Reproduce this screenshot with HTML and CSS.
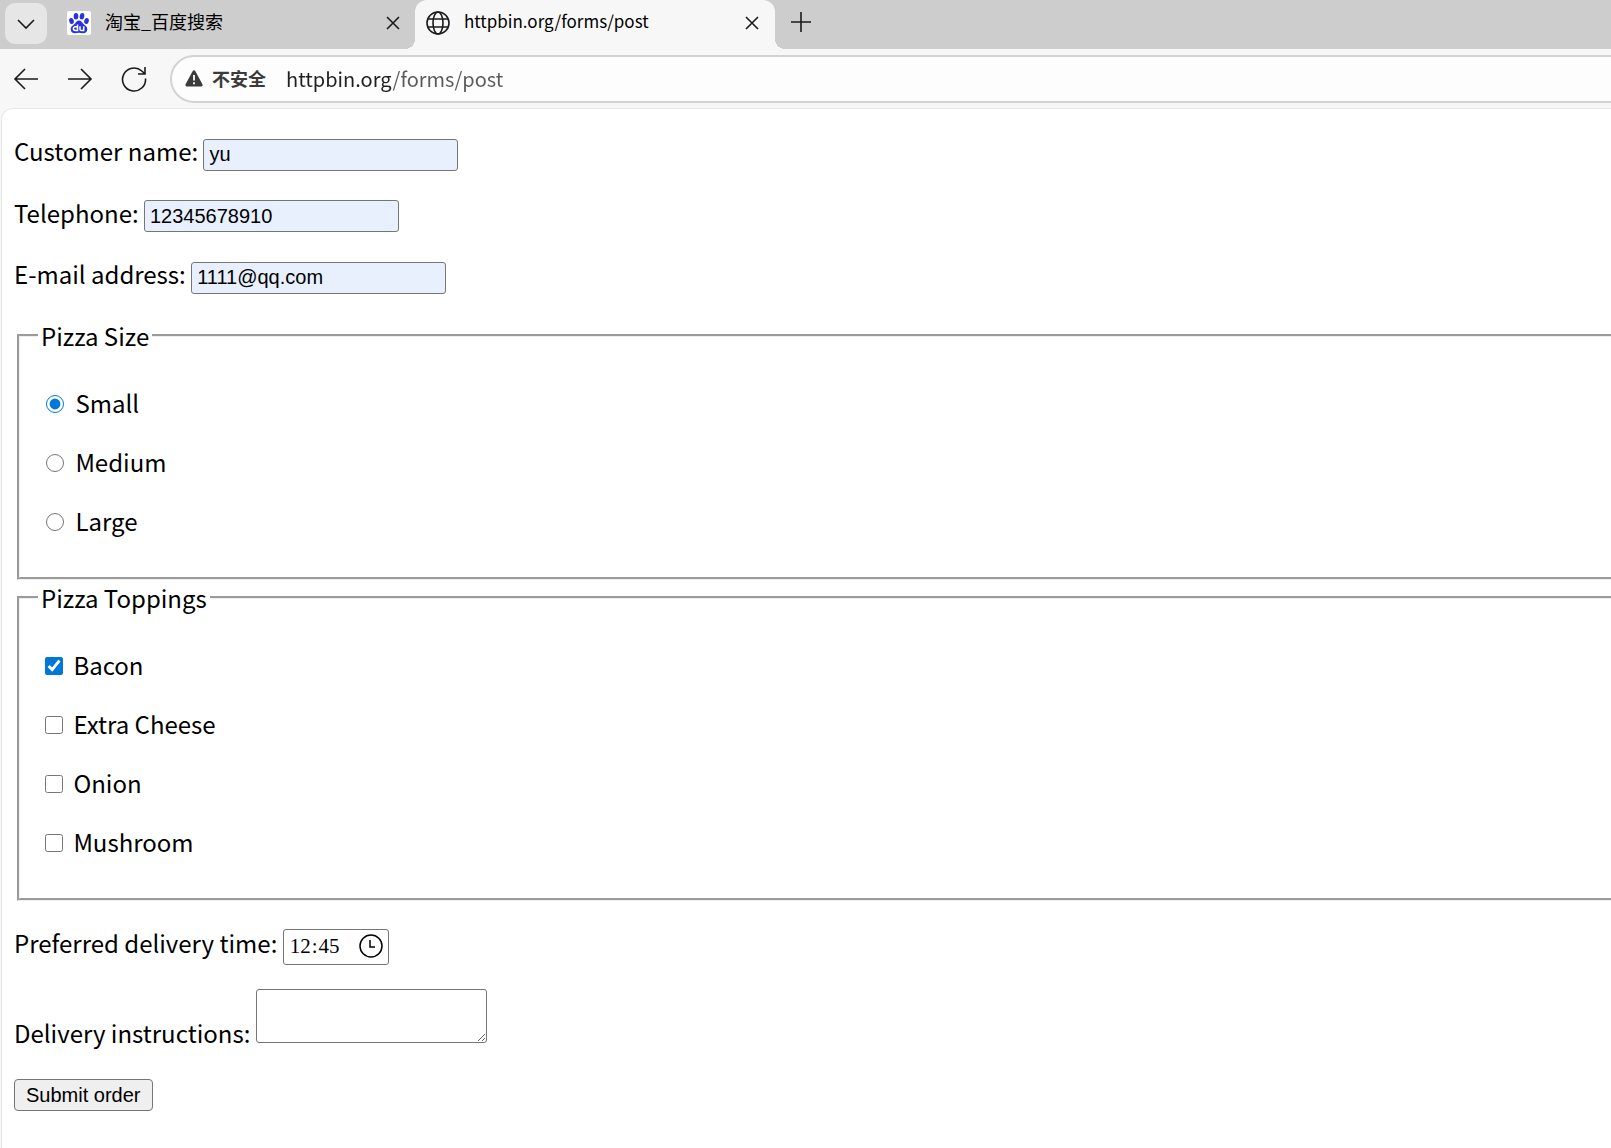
FILE: index.html
```html
<!DOCTYPE html>
<html lang="zh-CN">
<head>
    <meta charset="utf-8">
    <title>httpbin.org/forms/post</title>
    <link rel="stylesheet" href="styles.css">
</head>
<body>
    <div class="tab-bar">
        <button class="tab-menu" type="button" aria-label="标签页菜单">
            <svg width="20" height="12" viewBox="0 0 20 12"><path d="M2 2l8 8 8-8"/></svg>
        </button>
        <div class="tab">
            <svg class="favicon" width="24" height="24" viewBox="0 0 24 24">
                <rect width="24" height="24" rx="2" fill="#fff"/>
                <g fill="#2932e1">
                    <ellipse cx="4.500" cy="10" rx="2.300" ry="3" transform="rotate(-12 4.500 10)"/>
                    <ellipse cx="9" cy="5.200" rx="2.300" ry="3.200"/>
                    <ellipse cx="15" cy="5.200" rx="2.300" ry="3.200" transform="rotate(8 15 5.200)"/>
                    <ellipse cx="19.500" cy="10" rx="2.300" ry="3" transform="rotate(12 19.500 10)"/>
                    <path d="M12 9.500c-2 0-3 1.600-4 3-1.300 1.600-4.300 2.700-4.300 5.700 0 2.600 1.800 4 4.300 4 1.500 0 2.600-.4 4-.4s2.500.4 4 .4c2.500 0 4.300-1.400 4.300-4 0-3-3-4.100-4.300-5.700-1-1.400-2-3-4-3z"/>
                </g>
                <path d="M10.500 13.500v6H8.300a1.900 1.900 0 0 1 0-3.800h2.200M13 15.200v3c0 1 .6 1.400 1.400 1.400h2.300v-4.400" fill="none" stroke="#fff" stroke-width="1.500"/>
            </svg>
            <span class="tab-title">淘宝_百度搜索</span>
            <button class="tab-close" type="button" aria-label="关闭标签页">
                <svg width="14" height="14" viewBox="0 0 14 14"><path d="M1 1l12 12M13 1L1 13"/></svg>
            </button>
        </div>
        <div class="tab active">
            <svg class="favicon" width="24" height="24" viewBox="0 0 24 24">
                <g fill="none" stroke="#1b1b1b" stroke-width="1.600">
                    <circle cx="12" cy="12" r="11"/>
                    <ellipse cx="12" cy="12" rx="5" ry="11"/>
                    <path d="M2 8h20M2 16h20"/>
                </g>
            </svg>
            <span class="tab-title">httpbin.org/forms/post</span>
            <button class="tab-close" type="button" aria-label="关闭标签页">
                <svg width="14" height="14" viewBox="0 0 14 14"><path d="M1 1l12 12M13 1L1 13"/></svg>
            </button>
        </div>
        <button class="new-tab" type="button" aria-label="新建标签页">
            <svg width="22" height="22" viewBox="0 0 22 22"><path d="M11 1v20M1 11h20"/></svg>
        </button>
    </div>

    <div class="toolbar">
        <button class="nav-button" type="button" aria-label="后退">
            <svg width="26" height="26" viewBox="0 0 26 26"><path d="M25 13H2M12 3L2 13l10 10"/></svg>
        </button>
        <button class="nav-button" type="button" aria-label="前进">
            <svg width="26" height="26" viewBox="0 0 26 26"><path d="M1 13h23M14 3l10 10-10 10"/></svg>
        </button>
        <button class="nav-button" type="button" aria-label="刷新">
            <svg width="26" height="26" viewBox="0 0 26 26"><path d="M24.500 12.500A11.500 11.500 0 1 1 20.800 5l3 2.600M24 1v7h-7"/></svg>
        </button>
        <div class="address-bar">
            <svg width="18" height="17" viewBox="0 0 18 17">
                <path d="M7.600 1.200a1.600 1.600 0 0 1 2.800 0l7 13c.6 1.100-.1 2.300-1.400 2.300H2C.7 16.500 0 15.300.6 14.200z" fill="#3b3b3b"/>
                <path d="M9 5v5.500M9 12.300v1.900" stroke="#fff" stroke-width="1.800"/>
            </svg>
            <span class="security">不安全</span>
            <input class="url" type="text" aria-label="地址栏" value="httpbin.org/forms/post">
        </div>
    </div>

    <div class="page">
        <form>
            <p><label>Customer name: <input class="field filled" name="custname" value="yu"></label></p>
            <p><label>Telephone: <input class="field filled" type="tel" name="custtel" value="12345678910"></label></p>
            <p><label>E-mail address: <input class="field filled" type="email" name="custemail" value="1111@qq.com"></label></p>
            <fieldset>
                <legend> Pizza Size </legend>
                <p><label><input type="radio" name="size" value="small" checked> Small </label></p>
                <p><label><input type="radio" name="size" value="medium"> Medium </label></p>
                <p><label><input type="radio" name="size" value="large"> Large </label></p>
            </fieldset>
            <fieldset>
                <legend> Pizza Toppings </legend>
                <p><label><input type="checkbox" name="topping" value="bacon" checked> Bacon </label></p>
                <p><label><input type="checkbox" name="topping" value="cheese"> Extra Cheese </label></p>
                <p><label><input type="checkbox" name="topping" value="onion"> Onion </label></p>
                <p><label><input type="checkbox" name="topping" value="mushroom"> Mushroom </label></p>
            </fieldset>
            <p><label>Preferred delivery time: <input class="field time" type="time" name="delivery" value="12:45"></label></p>
            <p><label>Delivery instructions: <textarea class="field comments" name="comments"></textarea></label></p>
            <p><button class="submit">Submit order</button></p>
        </form>
    </div>
</body>
</html>
```

FILE: styles.css
```css
* {
    box-sizing: border-box;
}

body {
    margin: 0;
    min-height: 100vh;
    display: flex;
    flex-direction: column;
    overflow: hidden;
    background: #f7f7f7;
    font-family: "Noto Sans CJK SC", sans-serif;
    color: #000;
}

svg {
    display: block;
    flex: none;
}

button svg {
    fill: none;
    stroke: #1b1b1b;
    stroke-width: 1.6;
}

.tab-bar button,
.toolbar button {
    display: flex;
    align-items: center;
    justify-content: center;
    padding: 0;
    border: 0;
    background: none;
}

/* tabs */
.tab-bar {
    display: flex;
    height: 49px;
    padding-left: 5px;
    background: #cdcdcd;
}

.tab-bar .tab-menu {
    width: 42px;
    height: 41px;
    margin: 3px 10px 0 0;
    border-radius: 10px;
    background: #e6e6e6;
}

.tab {
    display: flex;
    align-items: center;
    width: 358px;
    padding: 0 10px 4px;
}

.tab.active {
    position: relative;
    width: 360px;
    padding: 0 11px 4px;
    border-radius: 12px 12px 0 0;
    background: #f7f7f7;
}

/* curved feet on both sides of the current tab */
.tab.active::before,
.tab.active::after {
    content: "";
    position: absolute;
    bottom: 0;
    width: 10px;
    height: 10px;
}

.tab.active::before {
    left: -10px;
    background: radial-gradient(circle at 0 0, #cdcdcd 10px, #f7f7f7 10px);
}

.tab.active::after {
    right: -10px;
    background: radial-gradient(circle at 100% 0, #cdcdcd 10px, #f7f7f7 10px);
}

.tab-title {
    flex: 1;
    margin-left: 14px;
    padding-bottom: 3px;
    font-size: 18px;
    line-height: 24px;
    white-space: nowrap;
}

.tab.active .tab-title {
    font-size: 17px;
}

.tab-close {
    width: 24px;
    height: 24px;
}

.new-tab {
    width: 52px;
    height: 43px;
}

/* navigation row */
.toolbar {
    display: flex;
    align-items: center;
    gap: 28px;
    height: 59px;
    padding-left: 13px;
}

.nav-button {
    width: 26px;
    height: 26px;
}

.address-bar {
    flex: 1;
    display: flex;
    align-items: center;
    height: 48px;
    margin: 0 -30px 0 -5px;
    padding-left: 13px;
    border: 2px solid #d3d3d3;
    border-radius: 24px;
    background: #fdfdfd;
}

.security {
    margin-left: 9px;
    padding-bottom: 2px;
    font-size: 18px;
    font-weight: bold;
    line-height: 26px;
    color: #3b3b3b;
}

/* the host is darker than the path */
.url {
    flex: 1;
    margin-left: 20px;
    padding: 0;
    border: 0;
    font-family: "Noto Sans CJK SC", sans-serif;
    font-size: 20px;
    line-height: 28px;
    color: transparent;
    background: linear-gradient(to right, #1f1f1f 106px, #5a5a5a 106px);
    -webkit-background-clip: text;
    background-clip: text;
}

/* order form */
.page {
    flex: 1;
    margin: 0 -20px 0 1px;
    padding: 0 12px;
    border: 1px solid #e8e8e8;
    border-width: 1px 0 0 1px;
    border-radius: 12px 0 0 0;
    background: #fff;
    font-size: 24px;
    line-height: 35px;
}

p {
    margin: 24px 0;
}

fieldset {
    margin: 0 3px;
    padding: 8px 18px 15px;
    border: 3px groove #efefef;
}

legend {
    padding: 0 3px;
}

.field {
    border: 1px solid #767676;
    border-radius: 3px;
    background: #fff;
    color: #000;
}

.filled {
    width: 255px;
    height: 32px;
    padding: 2px 5px;
    background: #e8f0fe;
    font: 20px "Liberation Sans", sans-serif;
}

input[type="radio"],
input[type="checkbox"] {
    width: 18px;
    height: 18px;
    margin: 5px 6px 2px 8px;
    accent-color: #0078d7;
}

input[type="checkbox"] {
    margin: 5px 5px 7px 7px;
}

.time {
    width: 106px;
    height: 36px;
    padding: 0 5px 1px;
    font: 21px "Liberation Serif", serif;
}

.time::-webkit-datetime-edit-ampm-field {
    display: none;
}

.time::-webkit-calendar-picker-indicator {
    width: 24px;
    height: 24px;
    margin: 0;
    padding: 0;
    background: url("data:image/svg+xml,%3Csvg xmlns='http://www.w3.org/2000/svg' viewBox='0 0 24 24' fill='none' stroke='black' stroke-width='1.5'%3E%3Ccircle cx='12' cy='12' r='11'/%3E%3Cpath d='M11 6v7h5'/%3E%3C/svg%3E") no-repeat;
}

.comments {
    width: 231px;
    height: 54px;
    padding: 3px;
    font: 20px "Liberation Mono", monospace;
}

.submit {
    height: 32px;
    padding: 0 11px;
    border: 1px solid #767676;
    border-radius: 4px;
    background: #efefef;
    font: 20px "Liberation Sans", sans-serif;
    color: #000;
}
```
